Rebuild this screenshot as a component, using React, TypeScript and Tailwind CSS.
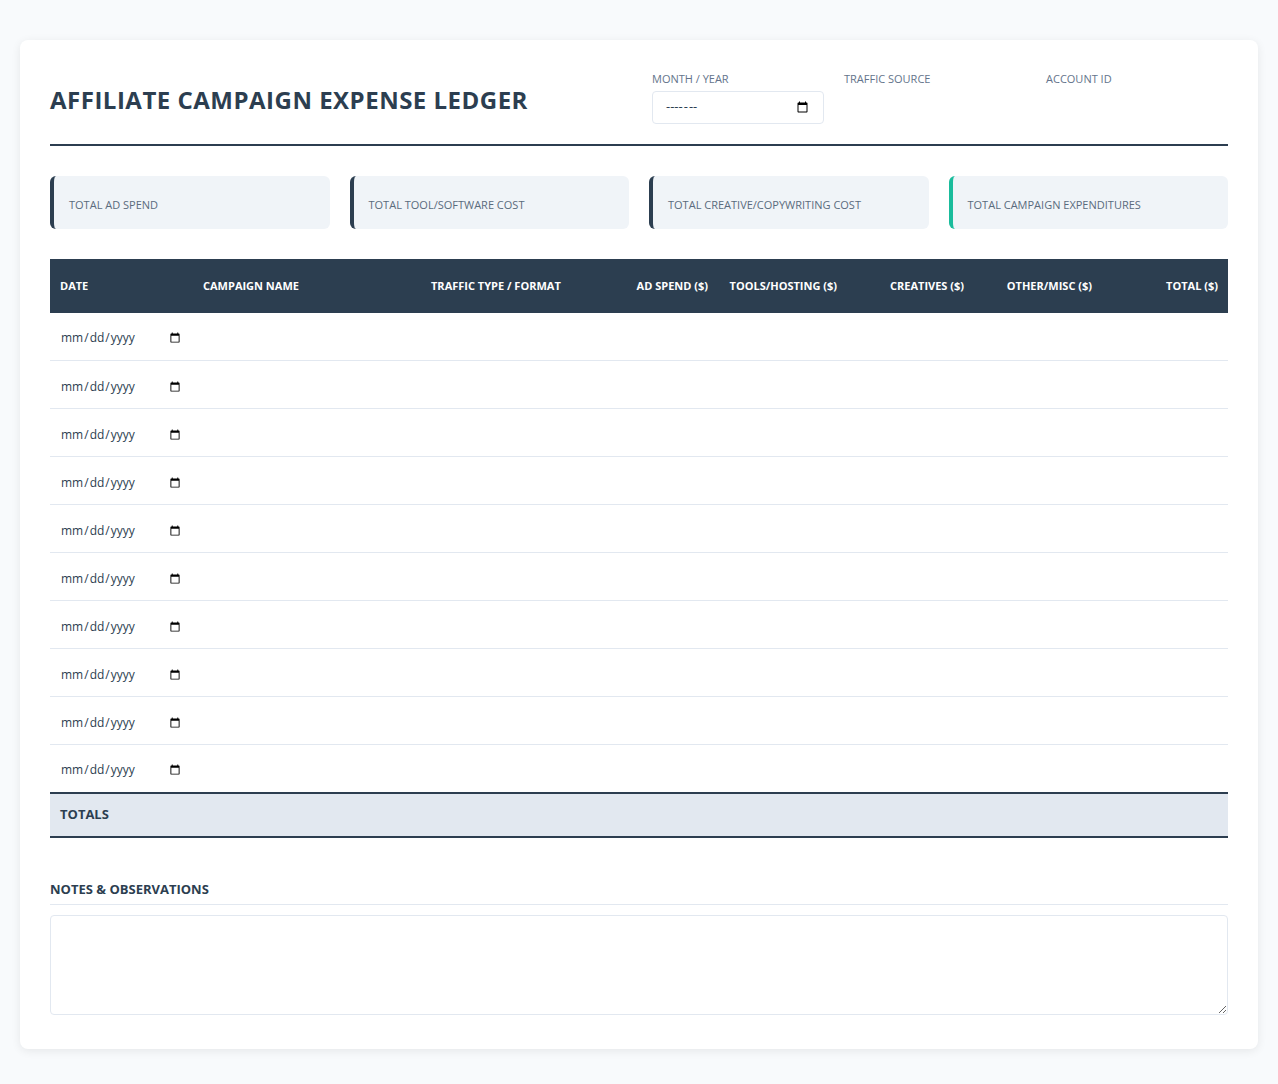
const cols = [
  { label: 'DATE', w: 'w-[143px]', align: 'text-left' },
  { label: 'CAMPAIGN NAME', w: 'w-[228px]', align: 'text-left' },
  { label: 'TRAFFIC TYPE / FORMAT', w: 'w-[202px]', align: 'text-left' },
  { label: 'AD SPEND ($)', w: 'w-[95px]', align: 'text-right' },
  { label: 'TOOLS/HOSTING ($)', w: 'w-[129px]', align: 'text-right' },
  { label: 'CREATIVES ($)', w: 'w-[127px]', align: 'text-right' },
  { label: 'OTHER/MISC ($)', w: 'w-[128px]', align: 'text-right' },
  { label: 'TOTAL ($)', w: 'w-[126px]', align: 'text-right' },
]

const summaries = [
  { label: 'TOTAL AD SPEND', border: 'border-[#2c3e50]' },
  { label: 'TOTAL TOOL/SOFTWARE COST', border: 'border-[#2c3e50]' },
  { label: 'TOTAL CREATIVE/COPYWRITING COST', border: 'border-[#2c3e50]' },
  { label: 'TOTAL CAMPAIGN EXPENDITURES', border: 'border-[#1abc9c]' },
]

export default function App() {
  return (
    <div className="min-h-[1084px] bg-[#f8fafc] px-5 pt-10 pb-10 text-[#2c3e50]" style={{ fontFamily: '"Open Sans", "Noto Sans", sans-serif' }}>
      <div className="rounded-lg bg-white px-[30px] pb-[34px] pt-[30px] shadow-[0_2px_10px_rgba(0,0,0,0.08)]">
        {/* Header */}
        <div className="flex items-start border-b-2 border-[#2c3e50] pb-5">
          <h1 className="mt-[12px] w-[602px] text-[24px] font-bold tracking-[0.5px]">AFFILIATE CAMPAIGN EXPENSE LEDGER</h1>
          <div className="flex gap-5 pt-[1px]">
            <div className="flex w-[172px] flex-col gap-[3px]">
              <span className="text-[11px] text-[#64748b]">MONTH / YEAR</span>
              <input type="month" className="h-[33px] rounded border border-[#e2e8f0] px-3 text-[13px]" />
            </div>
            <div className="w-[182px] text-[11px] text-[#64748b]">TRAFFIC SOURCE</div>
            <div className="w-[182px] text-[11px] text-[#64748b]">ACCOUNT ID</div>
          </div>
        </div>

        {/* Summary */}
        <div className="mt-[30px] grid grid-cols-4 gap-5">
          {summaries.map((s) => (
            <div key={s.label} className={`h-[53px] rounded-md border-l-4 bg-[#f0f4f8] px-[15px] pt-[15px] ${s.border}`}>
              <span className="text-[11px] text-[#5a6b7d]">{s.label}</span>
            </div>
          ))}
        </div>

        {/* Table */}
        <table className="mt-[30px] w-full table-fixed border-collapse">
          <thead>
            <tr className="h-[54px] bg-[#2c3e50] text-white">
              {cols.map((c) => (
                <th key={c.label} className={`${c.w} ${c.align} px-[10px] text-[11px] font-bold leading-[15px]`}>{c.label}</th>
              ))}
            </tr>
          </thead>
          <tbody>
            {Array.from({ length: 10 }).map((_, i) => (
              <tr key={i} className="h-[48px] border-b border-[#e2e8f0] last:border-b-0">
                <td className="px-[10px]">
                  <input type="date" className="w-full text-[12px] text-[#2c3e50]" />
                </td>
                {cols.slice(1).map((c) => <td key={c.label} />)}
              </tr>
            ))}
            <tr className="h-[44px] border-y-2 border-[#2c3e50] bg-[#e2e8f0]">
              <td className="px-[10px] text-[13px] font-bold">TOTALS</td>
              {cols.slice(1).map((c) => <td key={c.label} />)}
            </tr>
          </tbody>
        </table>

        {/* Notes */}
        <div className="mt-[42px]">
          <h3 className="border-b border-[#e2e8f0] pb-[5px] text-[13px] font-bold">NOTES &amp; OBSERVATIONS</h3>
          <textarea className="mt-[10px] block h-[100px] w-full rounded border border-[#e2e8f0] p-2 text-[13px]" />
        </div>
      </div>
    </div>
  )
}
